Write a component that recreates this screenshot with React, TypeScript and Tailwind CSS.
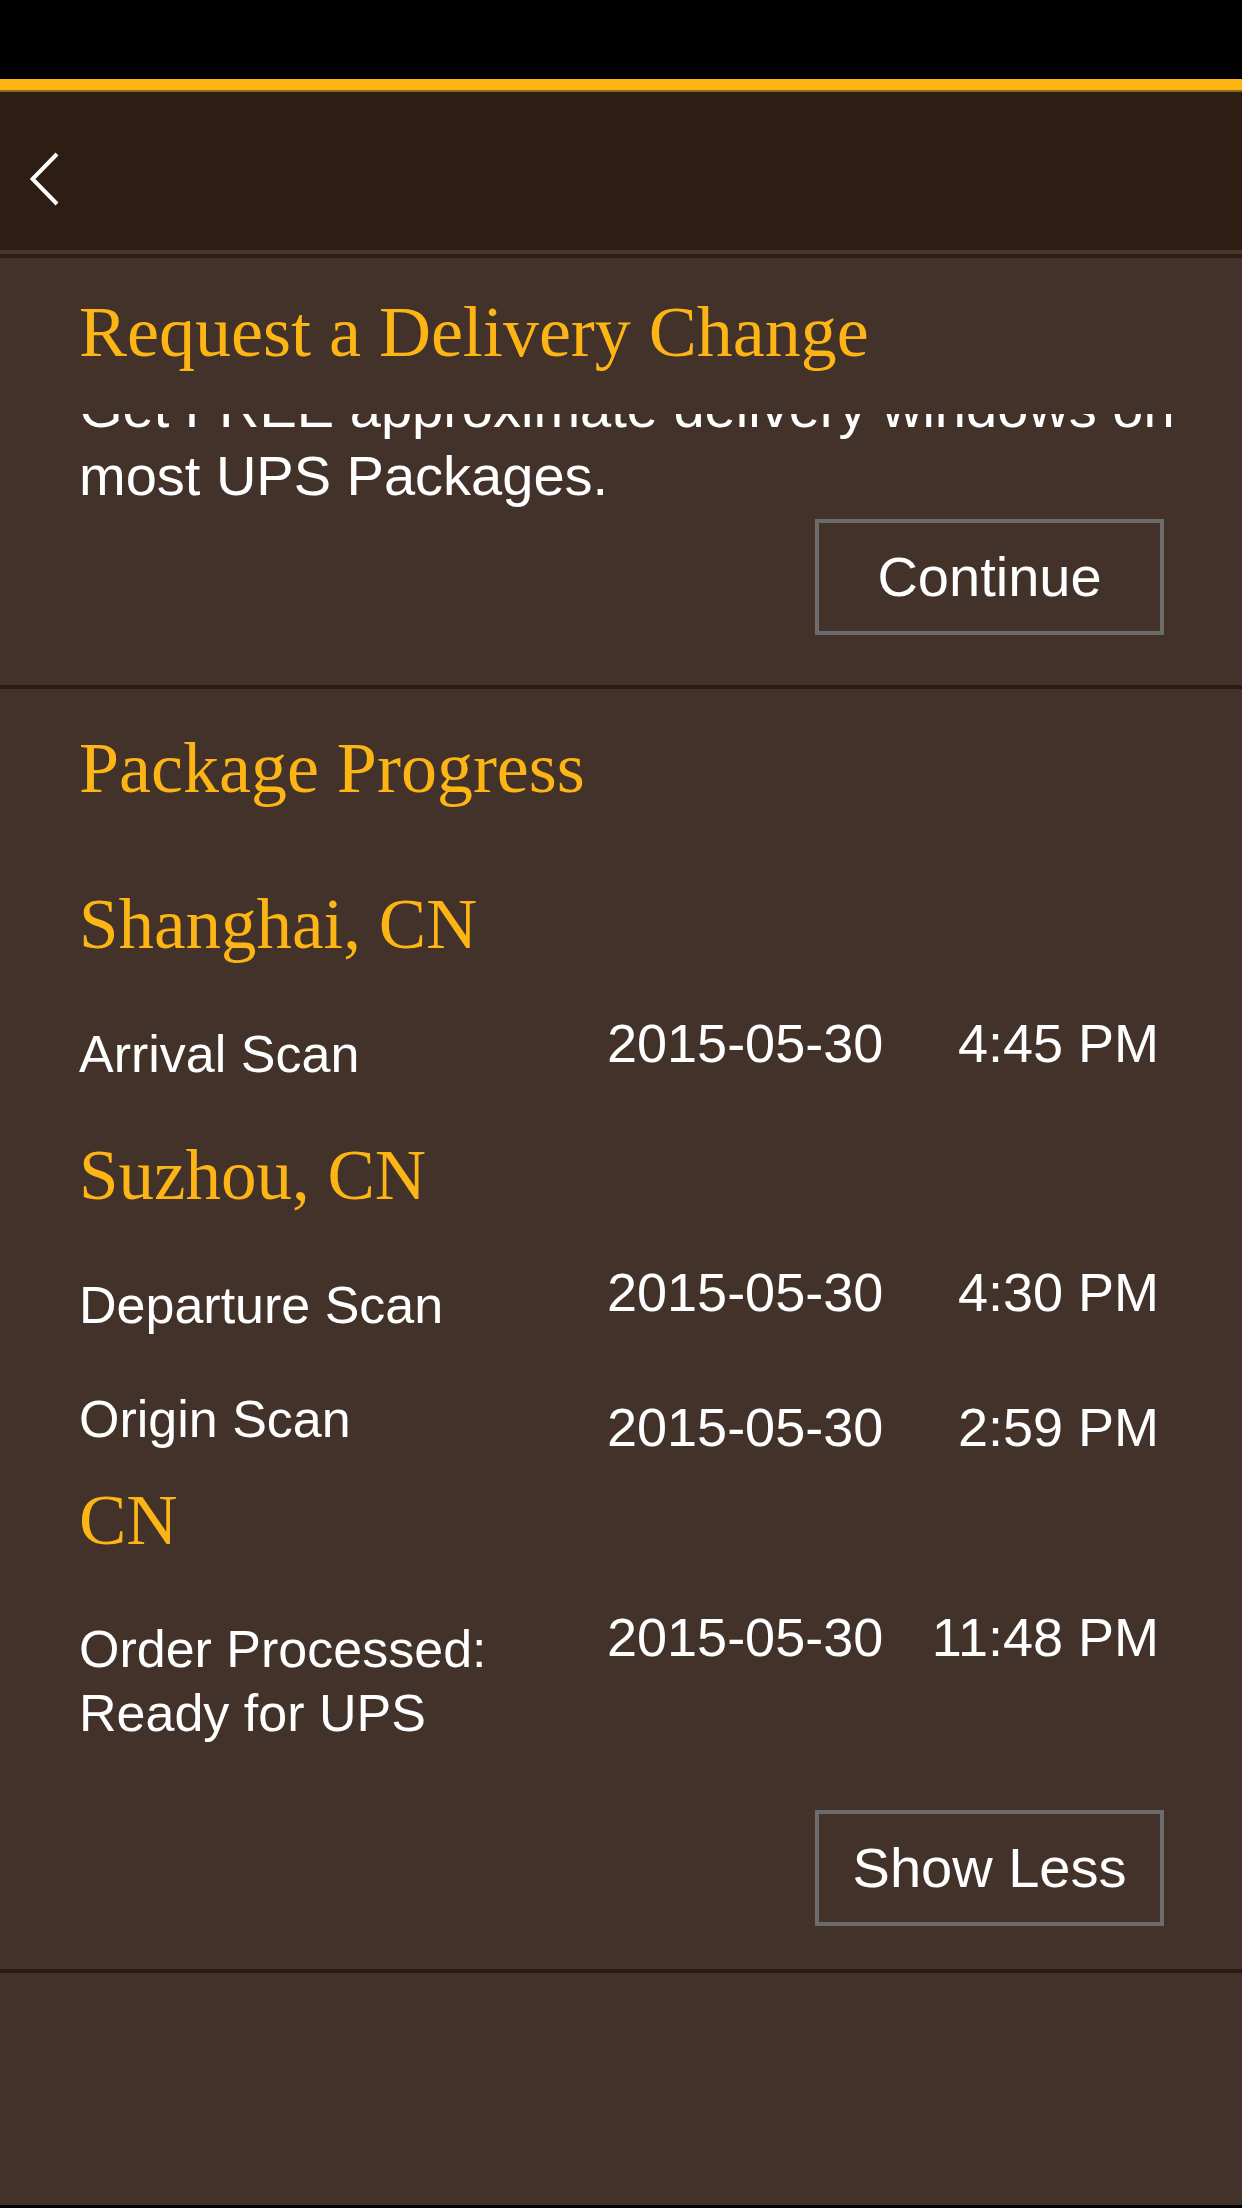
import React from "react";

const serif = "font-['Liberation_Serif',serif]";
const sans = "font-['Liberation_Sans',Arial,sans-serif]";

interface ScanRowProps {
  label: string[];
  date: string;
  time: string;
  labelPad: string;
  datePad: string;
  top: string;
}

function ScanRow({ label, date, time, labelPad, datePad, top }: ScanRowProps) {
  return (
    <div className={`flex items-start text-white ${top}`}>
      <div className={`w-[528px] text-[52px] leading-[64px] ${labelPad}`}>
        {label.map((line) => (
          <div key={line} className="whitespace-nowrap">
            {line}
          </div>
        ))}
      </div>
      <div className={`flex flex-1 text-[54px] leading-[64px] pr-[5px] ${datePad}`}>
        <span className="whitespace-nowrap">{date}</span>
        <span className="flex-1 text-right whitespace-nowrap">{time}</span>
      </div>
    </div>
  );
}

function OutlineButton({ text }: { text: string }) {
  return (
    <div className="flex justify-end">
      <button className="w-[349px] h-[116px] border-4 border-[#6c6c6c] flex items-center justify-center text-white text-[56px]">
        {text}
      </button>
    </div>
  );
}

function Location({ name, top }: { name: string; top: string }) {
  return (
    <h3 className={`${serif} text-[#fdb515] text-[71px] leading-[80px] whitespace-nowrap ${top}`}>
      {name}
    </h3>
  );
}

export default function App() {
  return (
    <div className={`w-[1242px] h-[2208px] bg-[#42322a] flex flex-col ${sans}`}>
      <div className="h-[79px] bg-black" />
      <div className="h-[11px] bg-[#fdb515]" />
      <div className="h-[2px] bg-[#8c6a1c]" />
      <div className="h-[158px] bg-[#2d1d12] flex items-center pl-[30px] pt-[16px]">
        <svg width="30" height="54" viewBox="0 0 30 54" fill="none">
          <path d="M27 2 L2.5 27 L27 52" stroke="#ffffff" strokeWidth="4" />
        </svg>
      </div>
      <div className="h-[4px] bg-[#46372d]" />
      <div className="h-[4px] bg-[#2d1d12]" />

      {/* delivery change */}
      <section className="pl-[79px] pr-[78px] pt-[34px] pb-[50px]">
        <h2 className={`${serif} text-[#fdb515] text-[72px] leading-[80px] whitespace-nowrap`}>
          Request a Delivery Change
        </h2>
        <div className="mt-[42px] -mr-[78px] h-[96px] overflow-hidden">
          <div className="-mt-[40px] text-white text-[56px] leading-[68px]">
            <div className="whitespace-nowrap">
              Get FREE approximate delivery windows on
            </div>
            <div className="whitespace-nowrap">most UPS Packages.</div>
          </div>
        </div>
        <div className="mt-[9px]">
          <OutlineButton text="Continue" />
        </div>
      </section>
      <div className="h-[4px] bg-[#2a1b11]" />

      {/* progress */}
      <section className="pl-[79px] pr-[78px] pt-[39px] pb-[43px]">
        <h2 className={`${serif} text-[#fdb515] text-[72px] leading-[80px] whitespace-nowrap`}>
          Package Progress
        </h2>
        <Location name="Shanghai, CN" top="mt-[76px]" />
        <ScanRow
          label={["Arrival Scan"]}
          date="2015-05-30"
          time="4:45 PM"
          labelPad="pt-[11px]"
          datePad=""
          top="mt-[47px]"
        />
        <Location name="Suzhou, CN" top="mt-[49px]" />
        <ScanRow
          label={["Departure Scan"]}
          date="2015-05-30"
          time="4:30 PM"
          labelPad="pt-[13px]"
          datePad=""
          top="mt-[45px]"
        />
        <ScanRow
          label={["Origin Scan"]}
          date="2015-05-30"
          time="2:59 PM"
          labelPad=""
          datePad="pt-[8px]"
          top="mt-[50px]"
        />
        <Location name="CN" top="mt-[21px]" />
        <ScanRow
          label={["Order Processed:", "Ready for UPS"]}
          date="2015-05-30"
          time="11:48 PM"
          labelPad="pt-[12px]"
          datePad=""
          top="mt-[45px]"
        />
        <div className="mt-[65px]">
          <OutlineButton text="Show Less" />
        </div>
      </section>
      <div className="h-[4px] bg-[#2a1b11]" />
      <div className="flex-1" />
      <div className="h-[3px] bg-black" />
    </div>
  );
}
